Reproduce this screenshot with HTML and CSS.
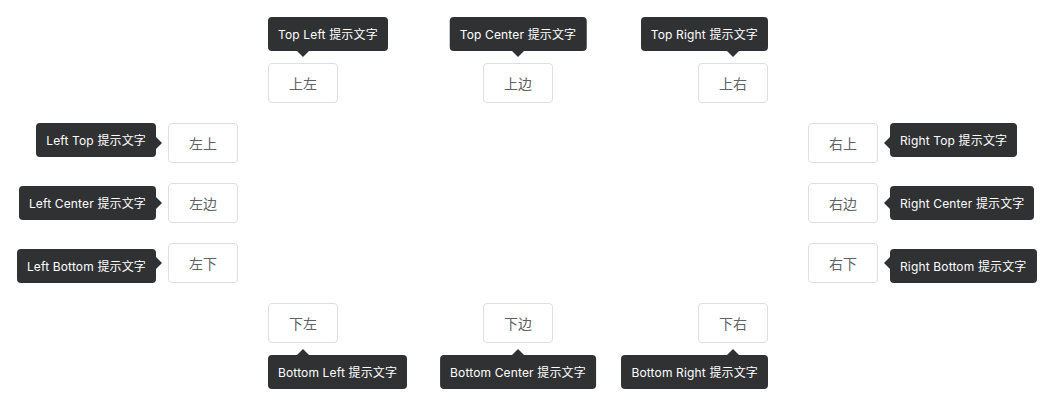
FILE: index.html
```html
<!DOCTYPE html>
<html lang="zh">
<head>
<meta charset="utf-8">
<link rel="stylesheet" href="styles.css">
</head>
<body>
<div class="box">
  <div class="row row-top">
    <div class="item"><button class="btn">上左</button><div class="tip tip-top-start">Top Left 提示文字</div><span class="arrow arrow-top"></span></div>
    <div class="item"><button class="btn">上边</button><div class="tip tip-top">Top Center 提示文字</div><span class="arrow arrow-top"></span></div>
    <div class="item"><button class="btn">上右</button><div class="tip tip-top-end">Top Right 提示文字</div><span class="arrow arrow-top"></span></div>
  </div>
  <div class="middle">
    <div class="col">
      <div class="item"><button class="btn">左上</button><div class="tip tip-left-start">Left Top 提示文字</div><span class="arrow arrow-left"></span></div>
      <div class="item"><button class="btn">左边</button><div class="tip tip-left">Left Center 提示文字</div><span class="arrow arrow-left"></span></div>
      <div class="item"><button class="btn">左下</button><div class="tip tip-left-end">Left Bottom 提示文字</div><span class="arrow arrow-left"></span></div>
    </div>
    <div class="col">
      <div class="item"><button class="btn">右上</button><div class="tip tip-right-start">Right Top 提示文字</div><span class="arrow arrow-right"></span></div>
      <div class="item"><button class="btn">右边</button><div class="tip tip-right">Right Center 提示文字</div><span class="arrow arrow-right"></span></div>
      <div class="item"><button class="btn">右下</button><div class="tip tip-right-end">Right Bottom 提示文字</div><span class="arrow arrow-right"></span></div>
    </div>
  </div>
  <div class="row row-bottom">
    <div class="item"><button class="btn">下左</button><div class="tip tip-bottom-start">Bottom Left 提示文字</div><span class="arrow arrow-bottom"></span></div>
    <div class="item"><button class="btn">下边</button><div class="tip tip-bottom">Bottom Center 提示文字</div><span class="arrow arrow-bottom"></span></div>
    <div class="item"><button class="btn">下右</button><div class="tip tip-bottom-end">Bottom Right 提示文字</div><span class="arrow arrow-bottom"></span></div>
  </div>
</div>
</body>
</html>
```
FILE: styles.css
```css
html, body {
  margin: 0;
  padding: 0;
  background: #ffffff;
}
body {
  font-family: "Inter", "Noto Sans CJK SC", sans-serif;
  min-height: 407px;
}
.box {
  width: 710px;
  padding: 63px 0 64px 168px;
}
.row {
  display: flex;
  gap: 145px;
  padding-left: 100px;
}
.middle {
  display: flex;
  justify-content: space-between;
  margin: 20px 0;
}
.col {
  display: flex;
  flex-direction: column;
  gap: 20px;
}
.item {
  position: relative;
  width: 70px;
  height: 40px;
}
.btn {
  box-sizing: border-box;
  width: 70px;
  height: 40px;
  padding: 0;
  margin: 0;
  border: 1px solid #dcdfe6;
  border-radius: 4px;
  background: #fff;
  color: #606266;
  font-family: "Noto Sans CJK SC", sans-serif;
  font-size: 14px;
  line-height: 1;
  cursor: pointer;
}
.tip {
  position: absolute;
  box-sizing: border-box;
  height: 34px;
  padding: 1px 10px 0;
  border-radius: 4px;
  background: #303133;
  color: #fff;
  font-size: 12px;
  line-height: 33px;
  letter-spacing: 0.15px;
  white-space: nowrap;
  z-index: 2;
}
.tip-top-start, .tip-top, .tip-top-end { bottom: calc(100% + 12px); }
.tip-bottom-start, .tip-bottom, .tip-bottom-end { top: calc(100% + 12px); }
.tip-top-start, .tip-bottom-start { left: 0; }
.tip-top-end, .tip-bottom-end { right: 0; }
.tip-top, .tip-bottom { left: 50%; transform: translateX(-50%); }
.tip-left-start, .tip-left, .tip-left-end { right: calc(100% + 12px); }
.tip-right-start, .tip-right, .tip-right-end { left: calc(100% + 12px); }
.tip-left-start, .tip-right-start { top: 0; }
.tip-left-end, .tip-right-end { bottom: 0; }
.tip-left, .tip-right { top: 50%; transform: translateY(-50%); }
.arrow {
  position: absolute;
  width: 0;
  height: 0;
  border: 6px solid transparent;
  z-index: 3;
}
.arrow-top {
  bottom: 100%;
  left: calc(50% - 6px);
  border-top-color: #303133;
  border-bottom-width: 0;
  margin-bottom: 6px;
}
.arrow-bottom {
  top: 100%;
  left: calc(50% - 6px);
  border-bottom-color: #303133;
  border-top-width: 0;
  margin-top: 6px;
}
.arrow-left {
  right: 100%;
  top: calc(50% - 6px);
  border-left-color: #303133;
  border-right-width: 0;
  margin-right: 6px;
}
.arrow-right {
  left: 100%;
  top: calc(50% - 6px);
  border-right-color: #303133;
  border-left-width: 0;
  margin-left: 6px;
}
```
